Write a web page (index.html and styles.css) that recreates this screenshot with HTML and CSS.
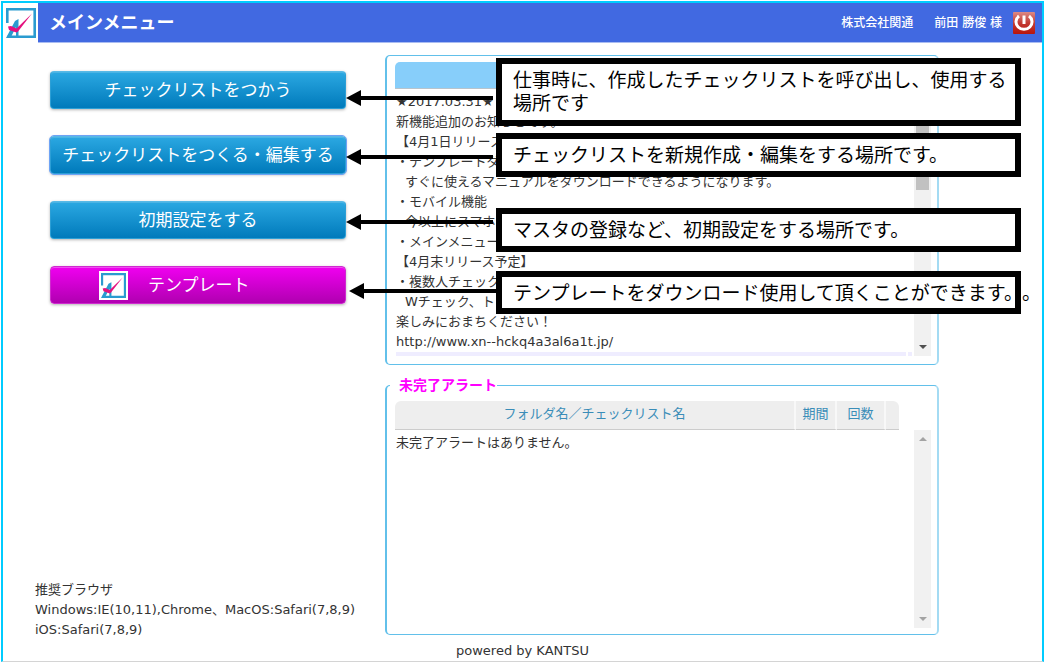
FILE: index.html
```html
<!DOCTYPE html>
<html lang="ja">
<head>
<meta charset="utf-8">
<title>メインメニュー</title>
<link rel="stylesheet" href="styles.css">
</head>
<body>
<svg class="defs" aria-hidden="true">
  <symbol id="logo" viewBox="0 0 30 30">
    <rect width="30" height="30" fill="#fff"/>
    <path d="M1.300 15V1.300h27.400v27.400H1.500" fill="none" stroke="#2a9bd0" stroke-width="2.600"/>
    <path d="M0 30L9 13l3.500-2V29H10V19L4.500 30z" fill="#2a9bd0"/>
    <path d="M2 18.500l3-.500 5.500 2.500L26 5.500 12 23.500l-1.500 1L3 22z" fill="#e4127f"/>
  </symbol>
</svg>
<div class="frame">
  <header class="header">
    <svg class="header-logo"><use href="#logo"/></svg>
    <div class="header-bar">
      <h1 class="title">メインメニュー</h1>
      <span class="company">株式会社関通</span>
      <span class="user">前田 勝俊 様</span>
      <button class="power" type="button" aria-label="ログアウト">
        <svg viewBox="0 0 22 22" width="22" height="22">
          <defs><linearGradient id="red" x2="0" y2="1"><stop stop-color="#dc8a85"/><stop offset=".5" stop-color="#c23a32"/><stop offset="1" stop-color="#b9150d"/></linearGradient></defs>
          <rect width="22" height="22" rx="1" fill="url(#red)"/>
          <path d="M6 4a8 7.500 0 1 0 10 0M11 3.500v8.500" fill="none" stroke="#fff" stroke-width="3"/>
        </svg>
      </button>
    </div>
  </header>
  <main class="main">
    <div class="side">
      <nav class="menu">
        <button class="btn" type="button">チェックリストをつかう</button>
        <button class="btn focused" type="button">チェックリストをつくる・編集する</button>
        <button class="btn" type="button">初期設定をする</button>
        <button class="btn template" type="button"><svg class="btn-logo"><use href="#logo"/></svg>テンプレート</button>
      </nav>
      <p class="browsers">推奨ブラウザ<br>Windows:IE(10,11),Chrome、MacOS:Safari(7,8,9)<br>iOS:Safari(7,8,9)</p>
    </div>
    <div class="panels">
      <section class="panel news">
        <div class="news-head"></div>
        <div class="scroll-row">
          <div class="news-body">
            <p>★2017.03.31★</p>
            <p>新機能追加のお知らせです。</p>
            <p>【4月1日リリース</p>
            <p>・テンプレートダ</p>
            <p class="indent">すぐに使えるマニュアルをダウンロードできるようになります。</p>
            <p>・モバイル機能</p>
            <p class="indent">今以上にスマホ</p>
            <p>・メインメニュー</p>
            <p>【4月末リリース予定】</p>
            <p>・複数人チェック</p>
            <p class="indent">Wチェック、ト</p>
            <p>楽しみにおまちください！</p>
            <p>http://www.xn--hckq4a3al6a1t.jp/</p>
            <div class="news-end"><span></span><span></span></div>
          </div>
          <div class="scrollbar"><i class="thumb"></i><i class="down"></i></div>
        </div>
      </section>
      <fieldset class="panel alerts">
        <legend>未完了アラート</legend>
        <div class="scroll-row alerts-row">
          <table class="table">
            <thead><tr><th>フォルダ名／チェックリスト名</th><th class="term">期間</th><th class="count">回数</th><th class="last"></th></tr></thead>
            <tbody><tr><td colspan="4">未完了アラートはありません。</td></tr></tbody>
          </table>
          <div class="scrollbar idle"><i class="up"></i><i class="down"></i></div>
        </div>
      </fieldset>
    </div>
  </main>
  <footer class="footer">powered by KANTSU</footer>
</div>
<div class="callout c1">仕事時に、作成したチェックリストを呼び出し、使用する場所です</div>
<div class="callout c2">チェックリストを新規作成・編集をする場所です。</div>
<div class="callout c3">マスタの登録など、初期設定をする場所です。</div>
<div class="callout c4">テンプレートをダウンロード使用して頂くことができます。</div>
<span class="stray">。</span>
<i class="arrow a1"></i>
<i class="arrow a2"></i>
<i class="arrow a3"></i>
<i class="arrow a4"></i>
</body>
</html>
```
FILE: styles.css
```css
* { box-sizing: border-box; }

body {
  margin: 0;
  padding-top: 1px;
  position: relative;
  background: #fff;
  color: #333;
  font: 13px/20px "DejaVu Sans", "Noto Sans CJK JP", sans-serif;
}

p, h1 { margin: 0; }

button { padding: 0; border: 0; font-family: inherit; cursor: pointer; }

.defs { position: absolute; width: 0; height: 0; }

.frame {
  display: flex;
  flex-direction: column;
  min-height: calc(100vh - 1px);
  margin: 0 8px 0 1px;
  border: 2px solid #0cf;
  border-bottom: 1px solid #d4d4d4;
}

/* Header */
.header { display: flex; height: 40px; }
.header-logo { width: 30px; height: 30px; margin: 5px 2px 0 3px; }
.header-bar {
  flex: 1;
  display: flex;
  align-items: center;
  padding: 0 7px 0 11px;
  background: #4169e1;
  border-bottom: 1px solid #a9bcf2;
  color: #fff;
  font-size: 12px;
  font-weight: 500;
}
.title { flex: 1; font-size: 18px; line-height: 24px; font-weight: 700; }
.company { margin-right: 21px; }
.user { margin-right: 11px; }
.power { width: 22px; height: 22px; background: none; }
.power svg { display: block; }

/* Columns */
.main {
  flex: 1;
  display: grid;
  grid-template-columns: 350fr 554fr;
  padding: 12px 103px 0 32px;
}
.side {
  display: flex;
  flex-direction: column;
  justify-content: space-between;
}
.menu {
  display: grid;
  gap: 27px;
  padding: 16px 39px 0 15px;
}
.browsers { margin-bottom: -5px; }
.btn {
  display: flex;
  align-items: center;
  justify-content: center;
  height: 38px;
  border: 1px solid #2c9fd6;
  border-top-color: #58b9e6;
  border-radius: 4px;
  background: linear-gradient(#2ba8e2, #007abb);
  box-shadow: 0 1px 3px rgba(0, 0, 0, .3), inset 0 1px 0 #4cb4e4;
  color: #fff;
  font-size: 17px;
  line-height: 24px;
  white-space: nowrap;
}
.focused { outline: 1px solid #6ea3f5; }
.template {
  justify-content: flex-start;
  gap: 20px;
  padding-left: 48px;
  border-color: #cf2acf;
  background: linear-gradient(#f000f0, #b000b0);
  box-shadow: 0 1px 3px rgba(0, 0, 0, .3), inset 0 1px 0 #f04cf0;
}
.btn-logo { width: 29px; height: 29px; padding: 2px; background: #fff; }

/* Panels */
.panels { display: flex; flex-direction: column; gap: 10px; }
.panel {
  min-width: 0;
  margin: 0;
  border: 1px solid #62c0ea;
  border-left-width: 2px;
  border-right: 2px solid #a4dbf3;
  border-radius: 5px;
}
.news { padding: 6px 6px 8px 8px; }
.news-head {
  width: 504px;
  height: 27px;
  margin-bottom: 3px;
  background: #87cefa;
  border-bottom: 1px solid #b8c4cc;
  border-radius: 5px 5px 0 0;
}
.scroll-row { display: flex; justify-content: space-between; }
.news-body { flex: 1; padding: 0 2px 0 1px; white-space: nowrap; }
.indent { padding-left: 9px; }
.news-end { display: flex; gap: 2px; }
.news-end span { height: 4px; width: 4px; background: #efedff; }
.news-end span:first-child { flex: 1; }

.scrollbar {
  display: flex;
  flex-direction: column;
  align-items: center;
  justify-content: space-between;
  width: 17px;
  background: #f1f1f1;
}
.thumb { width: 13px; height: 98px; background: #c1c1c1; }
.up, .down { border: 4px solid transparent; }
.up { margin-top: 3px; border-bottom-color: #a3a3a3; }
.down { margin-bottom: 3px; border-top-color: #505050; }
.idle .down { border-top-color: #a3a3a3; }

.alerts { flex: 1; padding: 6px 6px 6px 8px; }
.alerts legend {
  margin-left: -5px;
  padding: 0 0 0 9px;
  color: #f0f;
  font-size: 14px;
  font-weight: 700;
}
.alerts-row { height: 100%; }
.alerts .scrollbar { margin-top: 29px; height: 198px; }
.table {
  width: 504px;
  table-layout: fixed;
  align-self: flex-start;
  border-collapse: separate;
  border-spacing: 0;
}
.table th {
  height: 29px;
  padding: 0 0 3px;
  background: #eee;
  border-bottom: 1px solid #ccc;
  border-right: 2px solid #f8f8f8;
  color: #3a8db8;
  font-weight: 400;
}
.table th:first-child { border-top-left-radius: 6px; }
.table th.term { width: 41px; }
.table th.count { width: 49px; }
.table th.last { width: 13px; border-right: 0; border-top-right-radius: 6px; }
.table td { padding: 3px 1px; }

.footer { padding: 6px 0 0; text-align: center; }

/* Explanatory callouts over the screen */
.callout {
  position: absolute;
  left: 496px;
  width: 525px;
  padding: 5px 0 5px 11px;
  border: 6px solid #000;
  background: #fff;
  color: #000;
  font-size: 19px;
  line-height: 23px;
}
.c1 { top: 58px; height: 68px; }
.c2 { top: 133px; height: 44px; }
.c3 { top: 208px; height: 44px; }
.c4 { top: 271px; height: 43px; white-space: nowrap; }
.stray {
  position: absolute;
  top: 282px;
  left: 1022px;
  color: #000;
  font-size: 19px;
  line-height: 23px;
}
.arrow {
  position: absolute;
  left: 346px;
  width: 147px;
  height: 16px;
  background: #000;
  clip-path: polygon(0 50%, 15px 0, 15px 6px, 100% 6px, 100% 10px, 15px 10px, 15px 100%);
}
.a1 { top: 90px; }
.a2 { top: 149px; }
.a3 { top: 214px; }
.a4 { top: 283px; left: 349px; }
```
